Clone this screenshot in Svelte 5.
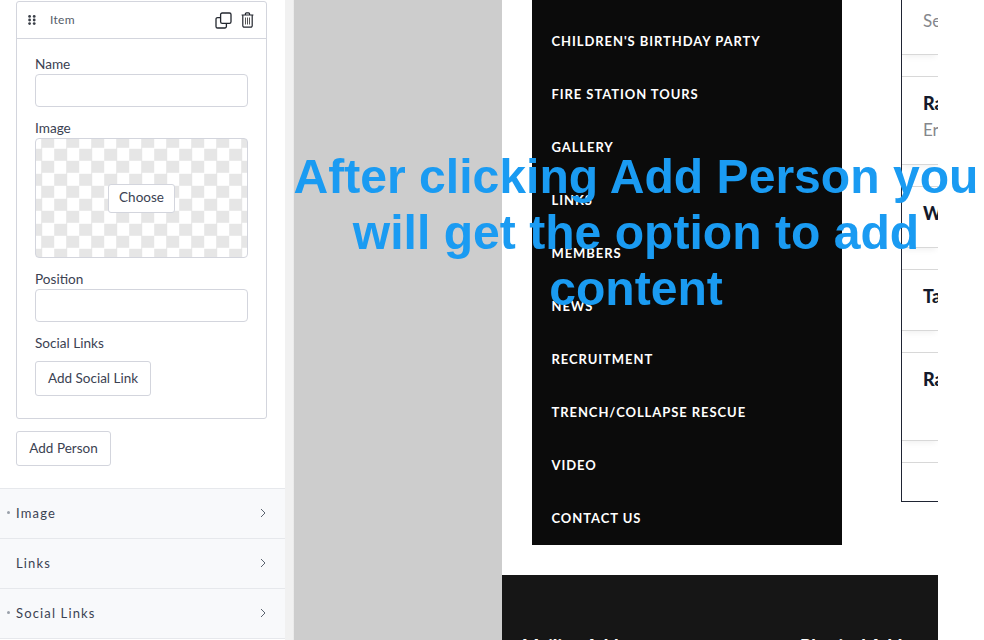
<script>
	let menu = [
		"Children's Birthday Party",
		'Fire Station Tours',
		'Gallery',
		'Links',
		'Members',
		'News',
		'Recruitment',
		'Trench/Collapse Rescue',
		'Video',
		'Contact Us'
	]
	let rows = [
		{ h: 55, title: '', sub: 'Se' },
		{ h: 89, title: 'Ra', sub: 'Er' },
		{ h: 62, title: 'W', sub: '' },
		{ h: 62, title: 'Ta', sub: '' },
		{ h: 89, title: 'Ra', sub: '' },
		{ h: 39, title: '', sub: '' }
	]
	let sections = [
		{ name: 'Image', dot: true },
		{ name: 'Links', dot: false },
		{ name: 'Social Links', dot: true }
	]
</script>

<div class="screen">
	<aside class="sidebar">
		<div class="pad">
			<div class="item">
				<div class="item-head">
					<svg class="grip" width="8" height="10" viewBox="0 0 8 10">
						{#each [1.4, 5, 8.6] as y}
							<circle cx="1.6" cy={y} r="1.4" />
							<circle cx="6.2" cy={y} r="1.4" />
						{/each}
					</svg>
					<span class="item-title">Item</span>
					<svg class="copy" width="17" height="17" viewBox="0 0 17 17" fill="none" stroke="#23272f" stroke-width="1.3">
						<rect x="5.6" y="1" width="10.4" height="10.4" rx="1.6" />
						<path d="M5.6 5.6H2.6A1.6 1.6 0 0 0 1 7.2v7.2A1.6 1.6 0 0 0 2.6 16h7.2a1.6 1.6 0 0 0 1.6-1.6v-3" />
					</svg>
					<svg class="trash" width="13" height="16" viewBox="0 0 13 16" fill="none" stroke="#23272f" stroke-width="1.2">
						<path d="M.6 3h11.8M4.4 3V1.9a1 1 0 0 1 1-1h2.2a1 1 0 0 1 1 1V3" />
						<path d="M1.8 3v10.8a1.4 1.4 0 0 0 1.4 1.4h6.6a1.4 1.4 0 0 0 1.4-1.4V3" />
						<path d="M4.5 5.5v7M6.5 5.5v7M8.5 5.5v7" stroke-width="1" stroke="#555" />
					</svg>
				</div>
				<div class="item-body">
					<span class="label">Name</span>
					<div class="input"></div>
					<span class="label">Image</span>
					<div class="picker"><button class="choose">Choose</button></div>
					<span class="label">Position</span>
					<div class="input"></div>
					<span class="label">Social Links</span>
					<button class="btn social">Add Social Link</button>
				</div>
			</div>
			<button class="btn person">Add Person</button>
		</div>
		{#each sections as s}
			<div class="section">
				{#if s.dot}<i class="dot"></i>{/if}
				<span>{s.name}</span>
				<svg width="6" height="10" viewBox="0 0 6 10" fill="none" stroke="#5c6470" stroke-width="1">
					<path d="M1 1l4 4-4 4" />
				</svg>
			</div>
		{/each}
	</aside>
	<div class="scroll"></div>
	<div class="canvas"></div>
	<main class="page">
		<div class="top">
			<nav class="menu">
				{#each menu as m}
					<div class="link">{m}</div>
				{/each}
			</nav>
			<div class="cards">
				{#each rows as r, i}
					<div class="card" class:first={i === 0} style="height:{r.h}px">
						{#if r.title}<b>{r.title}</b>{/if}
						{#if r.sub}<span>{r.sub}</span>{/if}
					</div>
				{/each}
			</div>
		</div>
		<footer class="foot">
			<b>Mailing Address</b>
			<b>Physical Address</b>
		</footer>
	</main>
	<div class="overlay">After clicking Add Person you will get the option to add content</div>
</div>

<style>
	:global(body) {
		margin: 0;
		background: #fff;
	}

	.screen {
		position: relative;
		display: flex;
		width: 984px;
		height: 640px;
		overflow: hidden;
		font-family: Lato, sans-serif;
		color: #3b4252;
	}

	.sidebar {
		width: 285px;
		flex: none;
		background: #fff;
	}
	.pad {
		padding: 0 18px 22px 16px;
	}

	.item {
		border: 1px solid #d3d5dd;
		border-radius: 3px;
		margin-top: 1px;
	}
	.item-head {
		display: flex;
		align-items: center;
		height: 36px;
		border-bottom: 1px solid #d3d5dd;
		padding-left: 11px;
		padding-right: 12px;
	}
	.grip {
		fill: #3a3f48;
		margin-right: 14px;
	}
	.item-title {
		font-size: 12px;
		color: #555c68;
		letter-spacing: 0.3px;
		flex: 1;
		padding-bottom: 1px;
	}
	.copy {
		margin-right: 9px;
	}
	.item-body {
		display: flex;
		flex-direction: column;
		align-items: flex-start;
		padding: 17px 18px 22px;
	}
	.label {
		font-size: 13.6px;
		line-height: 17px;
		color: #3b4252;
		margin-bottom: 1px;
	}
	.input {
		width: 211px;
		height: 31px;
		border: 1px solid #d3d5dd;
		border-radius: 4px;
		margin-bottom: 13px;
	}
	.picker {
		width: 211px;
		height: 118px;
		border: 1px solid #d3d5dd;
		border-radius: 4px;
		margin-bottom: 13px;
		display: flex;
		align-items: center;
		justify-content: center;
		background-color: #fff;
		background-image: conic-gradient(#e6e6e6 25%, #fff 0 50%, #e6e6e6 0 75%, #fff 0);
		background-size: 25px 25px;
		background-position: -6.8px -3.2px;
	}
	.choose,
	.btn {
		font-family: inherit;
		font-size: 13.5px;
		color: #3b4252;
		background: #fff;
		border: 1px solid #d3d5dd;
		border-radius: 3px;
		padding: 0 0 2px;
	}
	.choose {
		width: 67px;
		height: 29px;
	}
	.social {
		width: 116px;
		height: 35px;
		margin-top: 8px;
	}
	.person {
		width: 95px;
		height: 35px;
		margin-top: 12px;
		display: block;
	}

	.section {
		position: relative;
		display: flex;
		align-items: center;
		justify-content: space-between;
		height: 50px;
		box-sizing: border-box;
		border-top: 1px solid #e6e8ec;
		background: #f8f9fb;
		padding: 0 19px 2px 16px;
		font-size: 13px;
		letter-spacing: 1.15px;
		color: #3b4252;
	}
	.section:last-child {
		height: 51px;
		border-bottom: 1px solid #e6e8ec;
	}
	.dot {
		position: absolute;
		left: 7px;
		top: 22px;
		width: 3px;
		height: 3px;
		border-radius: 50%;
		background: #9aa0aa;
	}

	.scroll {
		width: 9px;
		flex: none;
		background: linear-gradient(90deg, #f1f1f1 0 8px, #e4e4e4);
	}
	.canvas {
		width: 208px;
		flex: none;
		background: #cdcdcd;
	}

	.page {
		width: 436px;
		flex: none;
		background: #fff;
		overflow: hidden;
		display: flex;
		flex-direction: column;
	}
	.top {
		display: flex;
		align-items: flex-start;
		height: 575px;
		flex: none;
		padding-left: 30px;
		box-sizing: border-box;
	}
	.menu {
		width: 310px;
		height: 545px;
		flex: none;
		background: #0b0b0b;
		padding: 15px 0 0 19.5px;
		box-sizing: border-box;
	}
	.link {
		height: 53px;
		line-height: 53px;
		font-size: 13px;
		font-weight: 700;
		letter-spacing: 0.93px;
		text-transform: uppercase;
		color: #fff;
		white-space: nowrap;
	}

	.cards {
		margin-left: 59px;
		width: 37px;
		height: 502px;
		flex: none;
		border-left: 1px solid #1f2433;
		border-bottom: 1px solid #1f2433;
		box-sizing: border-box;
		white-space: nowrap;
		overflow: hidden;
	}
	.card {
		box-sizing: border-box;
		border-top: 1px solid #d8d8d8;
		border-bottom: 1px solid #d8d8d8;
		margin-bottom: 21px;
		padding: 13px 0 0 21px;
		box-shadow: 0 4px 6px -2px rgba(0, 0, 0, 0.06);
		font-size: 18px;
		line-height: 27px;
	}
	.card.first {
		border-top: 0;
		padding-top: 8px;
	}
	.card:last-child {
		margin-bottom: 0;
		border-bottom: 0;
		box-shadow: none;
	}
	.card b {
		display: block;
		font-weight: 900;
		color: #141a2b;
	}
	.card span {
		display: block;
		font-size: 17px;
		line-height: 26px;
		color: #85878c;
	}

	.foot {
		flex: 1;
		background: #161616;
		display: flex;
		padding: 60px 0 0 20px;
		color: #fff;
		font-size: 18px;
		white-space: nowrap;
		overflow: hidden;
	}
	.foot b {
		font-weight: 900;
	}
	.foot b:first-child {
		width: 278px;
		flex: none;
	}

	.overlay {
		position: absolute;
		left: 293px;
		top: 148px;
		width: 686px;
		text-align: center;
		font-family: 'Liberation Sans', Arial, sans-serif;
		font-weight: 700;
		font-size: 48.1px;
		line-height: 56px;
		color: #1a9bf2;
	}
</style>
